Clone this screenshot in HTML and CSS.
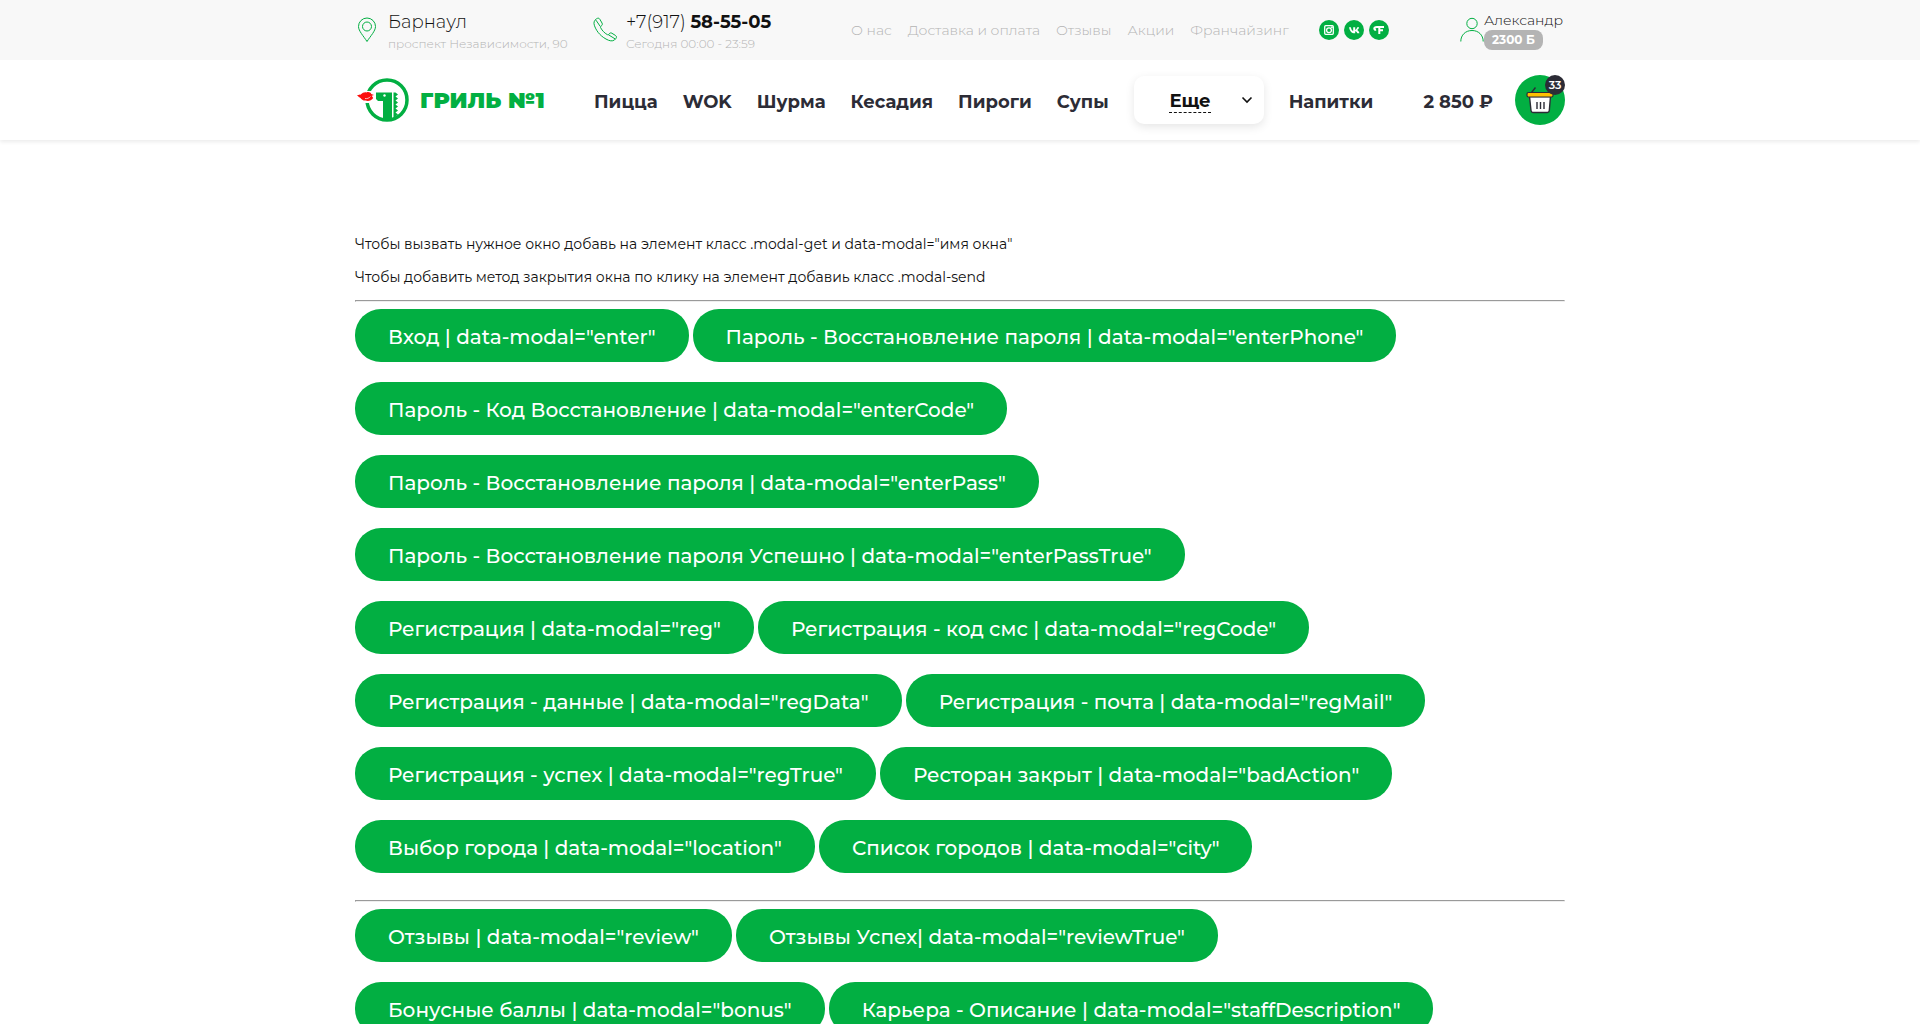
FILE: index.html
```
<!DOCTYPE html>
<html lang="ru">
<head>
<meta charset="utf-8">
<meta name="viewport" content="width=device-width, initial-scale=1">
<title>Гриль №1</title>
<link rel="stylesheet" href="styles.css">
</head>
<body>
<header class="header">
  <div class="topbar">
    <div class="container topbar-grid">
      <div class="contact">
        <svg class="contact-icon" width="24" height="26" viewBox="0 0 24 26" fill="none" stroke="#02af42">
          <path d="M12 24.500C8.500 19 3.500 14 3.500 9.500a8.500 8.500 0 0 1 17 0C20.500 14 15.500 19 12 24.500z"/>
          <circle cx="12" cy="9.500" r="4.500"/>
        </svg>
        <div class="contact-text">
          <a class="contact-main" href="#">Барнаул</a>
          <span class="contact-sub">проспект Независимости, 90</span>
        </div>
      </div>
      <div class="contact">
        <svg class="contact-icon" width="24" height="26" viewBox="0 0 24 26" fill="none" stroke="#02af42" stroke-linejoin="round">
          <path d="M3.500 1.800C5 .8 6 1 6.800 2.200L9 6c.7 1.300.3 2.200-.7 2.900-.9.600-1 1.300-.5 2.100 1.500 2.700 3.600 4.900 6.300 6.500.8.500 1.500.4 2-.5.700-1.100 1.700-1.500 2.900-.7l3.400 2.100c1.200.8 1.400 1.900.5 3.100-1.700 2.400-4.200 3-7.500 1.700C8.800 20.400 3.800 15.200 1.500 8.800.4 5.800 1 3.500 3.500 1.800z"/>
          <path d="M3 3.200l4.300 6.300M15.500 17.800l6.800 4.200"/>
        </svg>
        <div class="contact-text">
          <a class="contact-main" href="tel:+7917585505">+7(917) <b>58-55-05</b></a>
          <span class="contact-sub">Сегодня 00:00 - 23:59</span>
        </div>
      </div>
      <nav class="info-nav">
        <a href="#">О нас</a>
        <a href="#">Доставка и оплата</a>
        <a href="#">Отзывы</a>
        <a href="#">Акции</a>
        <a href="#">Франчайзинг</a>
      </nav>
      <div class="socials">
        <a href="#" aria-label="Instagram">
          <svg width="20" height="20" viewBox="0 0 20 20"><circle cx="10" cy="10" r="10" fill="#02af42"/><rect x="5.700" y="5.700" width="8.600" height="8.600" rx="1" fill="none" stroke="#fff" stroke-width="1.300"/><circle cx="10" cy="10.300" r="2.400" fill="none" stroke="#fff" stroke-width="1.300"/><path d="M11.800 7.200h2" stroke="#fff" stroke-width="1.400"/></svg>
        </a>
        <a href="#" aria-label="ВКонтакте">
          <svg width="20" height="20" viewBox="0 0 20 20"><circle cx="10" cy="10" r="10" fill="#02af42"/><path d="M10.700 13.300C7.500 13.300 5.700 11 5 7.200h1.900c.3 2 1 3.300 2.300 3.900V7.200h2v2.700c.9-.3 1.500-1.300 2-2.700h1.900c-.3 1.300-1 2.200-1.900 2.900 1 .6 1.800 1.600 2.200 3.200h-2c-.4-1-1-1.800-2.200-2.100v2.100z" fill="#fff"/></svg>
        </a>
        <a href="#" aria-label="Flamp">
          <svg width="20" height="20" viewBox="0 0 20 20"><circle cx="10" cy="10" r="10" fill="#02af42"/><path d="M15 6.900H8c-1.700 0-2.700.6-2.700 1.700 0 .9.800 1.400 1.800 1.200M10.300 6.500V14M10 10.300h4" fill="none" stroke="#fff" stroke-width="2"/></svg>
        </a>
      </div>
      <a class="user" href="#">
        <svg width="24" height="26" viewBox="0 0 24 26" fill="none" stroke="#02af42"><circle cx="12" cy="6.500" r="5.200"/><path d="M.8 24.500C.8 18 5.500 13.500 12 13.500S23.200 18 23.200 24.500"/></svg>
        <span class="user-text">
          <span class="user-name">Александр</span>
          <span class="user-bonus">2300 Б</span>
        </span>
      </a>
    </div>
  </div>
  <div class="container mainbar">
    <a class="logo" href="#">
      <svg width="52" height="46" viewBox="0 0 52 46">
        <circle cx="30" cy="23" r="20" fill="none" stroke="#02af42" stroke-width="3.500"/>
        <path d="M7 14h9v12H7z" fill="#fff"/>
        <path d="M19 15.500h16v28c-4 1-7 0-9-1V24h-5l-2-2z" fill="#02af42"/>
        <path d="M36.500 15.500h2l2.500 2-2.500 2 2.500 2-2.500 2 2.500 2-2.500 2 2.500 2-2.500 2 2.500 2-2.500 2 2.500 2-2.500 2 1 2-3 1.500z" fill="#02af42"/>
        <circle cx="27.500" cy="18.500" r="1.200" fill="#fff"/>
        <path d="M0 18c2-.3 3 0 4-.8 1.500-1.500 3.600-2.400 5.600-1.800 2-.8 4 .2 4.700 1.500l2.700 1-2.300.8 1.500 2.200c-1.700 2.400-4.700 3.800-7.500 2.700-2.500.2-4.200-1-5.200-2.600C2.500 20.500 1.200 19.500 0 18z" fill="#fb0f0c"/>
        <path d="M8 21.500c2 .3 4-.2 5.500-2" stroke="#fff" stroke-width=".7" fill="none"/>
      </svg>
      <span>ГРИЛЬ №1</span>
    </a>
    <nav class="menu">
      <a href="#">Пицца</a>
      <a href="#">WOK</a>
      <a href="#">Шурма</a>
      <a href="#">Кесадия</a>
      <a href="#">Пироги</a>
      <a href="#">Супы</a>
      <button class="more" type="button" aria-haspopup="true">
        <span>Еще</span>
        <svg width="12" height="8" viewBox="0 0 12 8" fill="none" stroke="#111" stroke-width="1.600"><path d="M1.500 1.500L6 6l4.500-4.500"/></svg>
      </button>
      <a href="#">Напитки</a>
    </nav>
    <span class="total">2 850 ₽</span>
    <a class="cart" href="#" aria-label="Корзина">
      <svg width="28" height="28" viewBox="0 0 28 28" stroke="#2c2c36" stroke-linejoin="round">
        <path d="M3.500 10.500h21l-1.200 14q-.2 2-2 2H7q-1.800 0-2-2z" fill="#fff" stroke-width="1.400"/>
        <path d="M5.500 6.500L9.500 1.500" fill="none" stroke-width="1.400"/>
        <rect x="1" y="6.500" width="26" height="4.500" rx="1.500" fill="#fdbf00" stroke-width="1.200"/>
        <path d="M11 16v7M14.500 16v7M18 16v7" stroke-width="1.400"/>
      </svg>
      <span class="cart-count">33</span>
    </a>
  </div>
</header>
<main class="container content">
  <p>Чтобы вызвать нужное окно добавь на элемент класс .modal-get и data-modal="имя окна"</p>
  <p>Чтобы добавить метод закрытия окна по клику на элемент добавиь класс .modal-send</p>
  <hr>
  <div class="buttons">
    <button class="btn" type="button">Вход | data-modal="enter"</button>
    <button class="btn" type="button">Пароль - Восстановление пароля | data-modal="enterPhone"</button>
    <button class="btn" type="button">Пароль - Код Восстановление | data-modal="enterCode"</button>
    <button class="btn" type="button">Пароль - Восстановление пароля | data-modal="enterPass"</button>
    <button class="btn" type="button">Пароль - Восстановление пароля Успешно | data-modal="enterPassTrue"</button>
    <button class="btn" type="button">Регистрация | data-modal="reg"</button>
    <button class="btn" type="button">Регистрация - код смс | data-modal="regCode"</button>
    <button class="btn" type="button">Регистрация - данные | data-modal="regData"</button>
    <button class="btn" type="button">Регистрация - почта | data-modal="regMail"</button>
    <button class="btn" type="button">Регистрация - успех | data-modal="regTrue"</button>
    <button class="btn" type="button">Ресторан закрыт | data-modal="badAction"</button>
    <button class="btn" type="button">Выбор города | data-modal="location"</button>
    <button class="btn" type="button">Список городов | data-modal="city"</button>
  </div>
  <hr>
  <div class="buttons">
    <button class="btn" type="button">Отзывы | data-modal="review"</button>
    <button class="btn" type="button">Отзывы Успех| data-modal="reviewTrue"</button>
    <button class="btn" type="button">Бонусные баллы | data-modal="bonus"</button>
    <button class="btn" type="button">Карьера - Описание | data-modal="staffDescription"</button>
  </div>
</main>
</body>
</html>
```
FILE: styles.css
```
* {
  box-sizing: border-box;
}

body {
  margin: 0;
  background: #fff;
  color: #111;
  font-family: Montserrat, Inter, "Open Sans", sans-serif;
  font-size: 14px;
  font-weight: 400;
}

a {
  color: inherit;
  text-decoration: none;
}

button {
  font-family: inherit;
  cursor: pointer;
}

svg {
  display: block;
  flex: none;
}

.container {
  width: 100%;
  max-width: 1210px;
  margin: 0 auto;
}

.header {
  box-shadow: 0 2px 4px rgba(0, 0, 0, 0.08);
}

.topbar {
  background: #f8f8f8;
}

.topbar-grid {
  display: grid;
  grid-template-columns: 238px 258px 468px 141px 1fr;
  align-items: center;
  height: 60px;
}

.contact {
  display: flex;
  align-items: center;
  gap: 9px;
}

.contact-text {
  display: flex;
  flex-direction: column;
  padding-top: 4px;
}

.contact-main {
  font-size: 18px;
  font-weight: 300;
  line-height: 24px;
}

.contact-main b {
  font-weight: 700;
}

.contact-sub {
  color: #b4b4b4;
  font-size: 12px;
  font-weight: 300;
  line-height: 20px;
}

.info-nav {
  display: flex;
  gap: 16px;
  color: #b4b4b4;
  font-size: 14px;
  font-weight: 300;
}

.socials {
  display: flex;
  gap: 5px;
}

.user {
  display: flex;
  align-items: center;
}

.user-text {
  display: flex;
  flex-direction: column;
  align-items: flex-start;
}

.user-name {
  font-size: 14px;
  font-weight: 300;
  line-height: 20px;
}

.user-bonus {
  padding: 0 8px;
  border-radius: 8px;
  background: #b4b4b4;
  color: #fff;
  font-size: 12px;
  font-weight: 700;
  line-height: 20px;
}

.mainbar {
  display: flex;
  align-items: center;
  height: 80px;
  color: #2c2c36;
}

.logo {
  display: flex;
  align-items: center;
  gap: 11px;
  width: 239px;
  padding-left: 2px;
  color: #02af42;
  font-size: 22px;
  font-weight: 900;
}

.menu {
  display: flex;
  flex: 1;
  align-items: center;
  gap: 25px;
  font-size: 18px;
  font-weight: 700;
}

.menu a,
.total {
  padding-top: 4px;
}

.more {
  display: flex;
  align-items: center;
  justify-content: flex-end;
  gap: 30px;
  width: 130px;
  height: 48px;
  padding: 0 11px;
  border: 0;
  border-radius: 10px;
  background: #fff;
  box-shadow: 0 3px 10px rgba(0, 0, 0, 0.1);
  color: #111;
  font-size: 18px;
  font-weight: 700;
}

.more span {
  padding-top: 2px;
  border-bottom: 1px dashed #111;
}

.total {
  margin-right: 22px;
  font-size: 18px;
  font-weight: 700;
}

.cart {
  position: relative;
  display: flex;
  align-items: center;
  justify-content: center;
  width: 50px;
  height: 50px;
  border-radius: 50%;
  background: #02af42;
}

.cart-count {
  position: absolute;
  top: 0;
  right: 0;
  width: 20px;
  border-radius: 50%;
  background: #2c2c36;
  color: #fff;
  font-size: 11px;
  font-weight: 600;
  line-height: 20px;
  text-align: center;
}

.content {
  padding-top: 94px;
}

.content p {
  margin: 0 0 13px;
  font-size: 14px;
  line-height: 20px;
}

.content hr {
  margin: 0 0 7px;
}

.buttons {
  display: flex;
  flex-wrap: wrap;
  gap: 20px 4px;
  padding-bottom: 27px;
}

.btn {
  height: 53px;
  padding: 2px 33px 0;
  border: 0;
  border-radius: 26px;
  background: #02af42;
  color: #fff;
  font-size: 20px;
  font-weight: 500;
}
```
